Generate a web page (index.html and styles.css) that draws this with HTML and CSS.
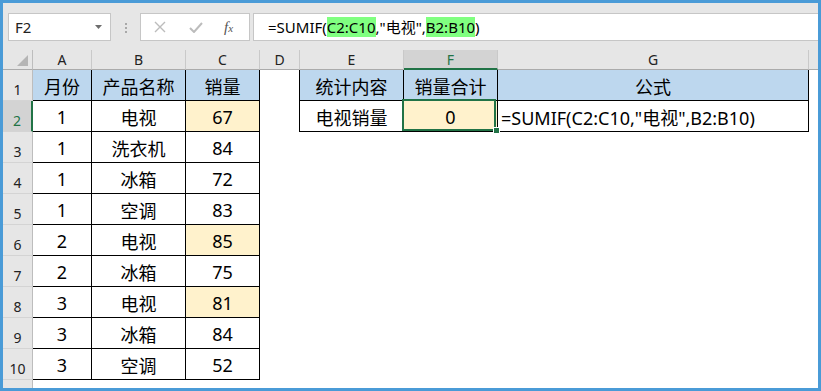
FILE: index.html
```html
<!DOCTYPE html>
<html lang="zh-CN">
<head>
    <meta charset="UTF-8">
    <title>SUMIF 示例</title>
    <link rel="stylesheet" href="styles.css">
</head>
<body>

<div class="window">
    <div class="topbar">
        <div class="namebox">
            <span>F2</span>
            <svg class="caret" width="7" height="4" viewBox="0 0 7 4"><polygon points="0,0 7,0 3.5,4" fill="#6d6d6d"/></svg>
        </div>
        <div class="grip"><i></i><i></i><i></i></div>
        <div class="fxbtns">
            <svg class="btn-x" width="12" height="12" viewBox="0 0 12 12"><path d="M1 1 L11 11 M11 1 L1 11" stroke="#bcbcbc" stroke-width="1.4" fill="none"/></svg>
            <svg class="btn-ok" width="14" height="11" viewBox="0 0 14 11"><path d="M1 6 L5 10 L13 1" stroke="#bcbcbc" stroke-width="2" fill="none"/></svg>
            <span class="fx">f<span>x</span></span>
        </div>
        <div class="fbar">=SUMIF(<span class="ref">C2:C10</span>,"电视",<span class="ref">B2:B10</span>)</div>
    </div>

    <div class="sheet">
        <!-- 列标 -->
        <div class="ch corner"><svg width="30" height="20" viewBox="0 0 30 20"><polygon points="14,16 25,5 25,16" fill="#b5b5b5"/></svg></div>
        <div class="ch">A</div>
        <div class="ch">B</div>
        <div class="ch">C</div>
        <div class="ch">D</div>
        <div class="ch">E</div>
        <div class="ch on">F</div>
        <div class="ch">G</div>
        <div class="ch end"></div>

        <!-- 第1行 -->
        <div class="rh">1</div>
        <div class="cell bd th">月份</div>
        <div class="cell bd th">产品名称</div>
        <div class="cell bd th">销量</div>
        <div class="cell edge"></div>
        <div class="cell bd th">统计内容</div>
        <div class="cell bd th">销量合计</div>
        <div class="cell bd th">公式</div>
        <div class="cell"></div>

        <!-- 第2行 -->
        <div class="rh on">2</div>
        <div class="cell bd">1</div>
        <div class="cell bd">电视</div>
        <div class="cell bd yl">67</div>
        <div class="cell edge"></div>
        <div class="cell bd">电视销量</div>
        <div class="cell bd yl sel">0</div>
        <div class="cell bd lt">=SUMIF(C2:C10,"电视",B2:B10)</div>
        <div class="cell"></div>

        <div class="rh">3</div>
        <div class="cell bd">1</div>
        <div class="cell bd">洗衣机</div>
        <div class="cell bd">84</div>
        <div class="rest"></div>

        <div class="rh">4</div>
        <div class="cell bd">1</div>
        <div class="cell bd">冰箱</div>
        <div class="cell bd">72</div>
        <div class="rest"></div>

        <div class="rh">5</div>
        <div class="cell bd">1</div>
        <div class="cell bd">空调</div>
        <div class="cell bd">83</div>
        <div class="rest"></div>

        <div class="rh">6</div>
        <div class="cell bd">2</div>
        <div class="cell bd">电视</div>
        <div class="cell bd yl">85</div>
        <div class="rest"></div>

        <div class="rh">7</div>
        <div class="cell bd">2</div>
        <div class="cell bd">冰箱</div>
        <div class="cell bd">75</div>
        <div class="rest"></div>

        <div class="rh">8</div>
        <div class="cell bd">3</div>
        <div class="cell bd">电视</div>
        <div class="cell bd yl">81</div>
        <div class="rest"></div>

        <div class="rh">9</div>
        <div class="cell bd">3</div>
        <div class="cell bd">冰箱</div>
        <div class="cell bd">84</div>
        <div class="rest"></div>

        <div class="rh">10</div>
        <div class="cell bd">3</div>
        <div class="cell bd">空调</div>
        <div class="cell bd">52</div>
        <div class="rest"></div>

        <div class="rh cut">11</div>
        <div class="rest wide"></div>
    </div>
</div>

</body>
</html>
```

FILE: styles.css
```css
body {
    margin: 0;
}
.window {
    width: 821px;
    height: 391px;
    box-sizing: border-box;
    border: 3px solid #4a9bd7;
    background: #e6e6e6;
    overflow: hidden;
    font-family: "Noto Sans", "Noto Sans CJK SC", sans-serif;
    color: #000;
}

/* 编辑栏 */
.topbar {
    height: 47px;
    box-sizing: border-box;
    padding: 10px 0 0 5px;
    display: flex;
    align-items: flex-start;
}
.namebox {
    width: 103px;
    height: 28px;
    box-sizing: border-box;
    border: 1px solid #c6c6c6;
    background: #fff;
    display: flex;
    align-items: center;
    justify-content: space-between;
    padding: 0 8px 0 6px;
    font-size: 15px;
    color: #222;
}
.grip {
    width: 2px;
    margin: 10px 13px 0 14px;
    display: flex;
    flex-direction: column;
    gap: 2px;
}
.grip i {
    width: 2px;
    height: 2px;
    background: #a8a8a8;
}
.fxbtns {
    width: 110px;
    height: 28px;
    box-sizing: border-box;
    border: 1px solid #c6c6c6;
    background: #fff;
    display: flex;
    align-items: center;
    padding-left: 13px;
}
.btn-ok {
    margin-left: 23px;
}
.fx {
    margin-left: 21px;
    font-family: "Liberation Serif", serif;
    font-style: italic;
    font-size: 15px;
    color: #555;
}
.fx span {
    font-size: 11px;
}
.fbar {
    flex: 1;
    height: 28px;
    margin-left: 3px;
    box-sizing: border-box;
    border: 1px solid #c6c6c6;
    border-right: none;
    background: #fff;
    padding-left: 14px;
    font-size: 15px;
    line-height: 26px;
    white-space: nowrap;
}
.ref {
    background: #80ff80;
}

/* 工作表 */
.sheet {
    display: grid;
    grid-template-columns: 30px 59px 94px 74px 40px 104px 94px 311px 9px;
    grid-template-rows: 20px repeat(10, 31px) 8px;
    background: #fff;
}
.ch {
    background: #e6e6e6;
    border-right: 1px solid #c9c9c9;
    border-bottom: 1px solid #ababab;
    box-sizing: border-box;
    text-align: center;
    font-size: 14px;
    line-height: 19px;
    color: #222;
}
.ch.corner {
    border-right-color: #bdbdbd;
}
.ch.corner svg {
    display: block;
}
.ch.end {
    border-right: none;
}
.ch.on {
    background: #d3d3d3;
    color: #217346;
    border-bottom: 2px solid #217346;
}
.rh {
    background: #e6e6e6;
    border-right: 1px solid #bdbdbd;
    border-bottom: 1px solid #d4d4d4;
    box-sizing: border-box;
    display: flex;
    align-items: flex-end;
    justify-content: center;
    padding-bottom: 1px;
    font-size: 14px;
    line-height: 18px;
    color: #222;
}
.rh.on {
    background: #d3d3d3;
    color: #217346;
    border-right: 2px solid #217346;
}
.rh.cut {
    align-items: flex-start;
    padding-top: 4px;
    overflow: hidden;
    border-bottom: none;
}
.cell {
    box-sizing: border-box;
    display: flex;
    align-items: center;
    justify-content: center;
    padding-top: 1px;
    font-size: 18px;
    white-space: nowrap;
}
.bd {
    border-right: 1px solid #000;
    border-bottom: 1px solid #000;
}
.edge {
    border-right: 1px solid #000;
}
.th {
    background: #bdd7ee;
}
.yl {
    background: #fff2cc;
}
.lt {
    justify-content: flex-start;
    padding-left: 3px;
}
.rest {
    grid-column: span 5;
}
.rest.wide {
    grid-column: span 8;
}
.sel {
    position: relative;
    z-index: 1;
}
.sel::before {
    content: "";
    position: absolute;
    top: -2px;
    left: -2px;
    right: 1px;
    bottom: 0;
    border: 2px solid #217346;
}
.sel::after {
    content: "";
    position: absolute;
    right: -3px;
    bottom: -3px;
    width: 5px;
    height: 5px;
    background: #217346;
    border: 1px solid #fff;
}
```
